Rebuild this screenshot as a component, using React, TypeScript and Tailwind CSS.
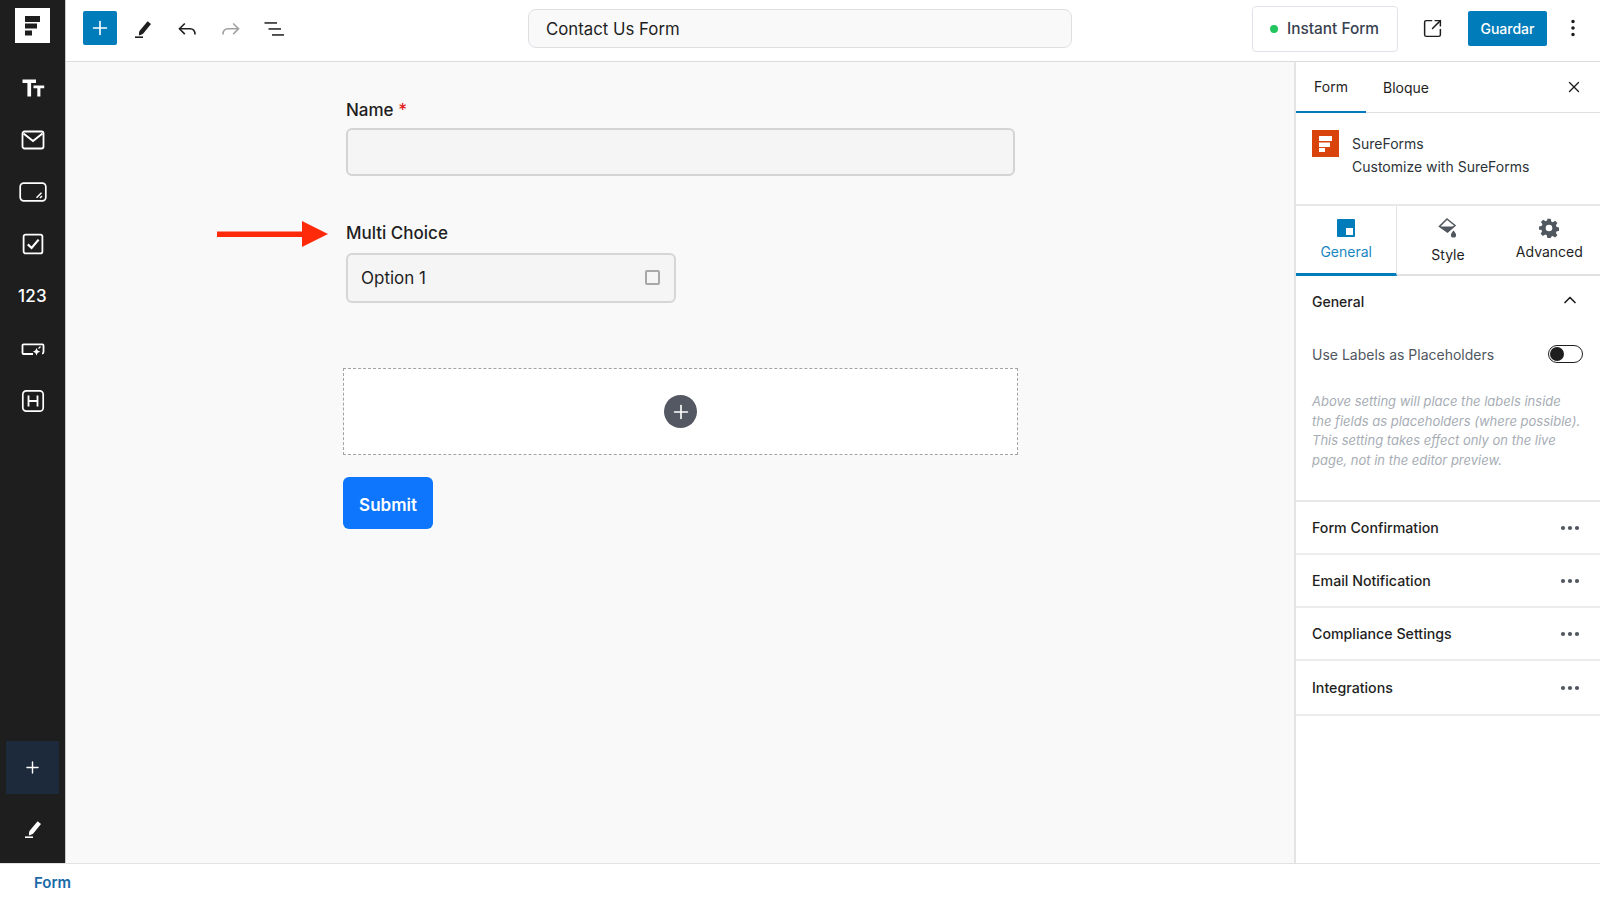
import React from "react";
import { Plus, X, ChevronUp, MoreHorizontal, MoreVertical, SquareArrowOutUpRight } from "lucide-react";

const Pencil = ({ color = "#1e1e1e" }: { color?: string }) => (
  <svg width="24" height="24" viewBox="0 0 24 24" fill="none">
    <path d="M16.6 4.2 20 6.9 12.3 16.4c-.6.7-2.6 1.5-4.3 2-.2-1.7.1-3.8.7-4.6L16.6 4.2Z" fill={color} />
    <rect x="4" y="19.4" width="8" height="1.6" fill={color} />
  </svg>
);

const UndoIcon = ({ color, flip }: { color: string; flip?: boolean }) => (
  <svg width="24" height="24" viewBox="0 0 24 24" fill="none" stroke={color} strokeWidth="1.6" className={flip ? "-scale-x-100" : ""}>
    <path d="M9.800 6.500 4.500 11.800l5.300 5.300" />
    <path d="M4.500 11.800H15c3 0 5 2 5 5.700" />
  </svg>
);

const ListIcon = () => (
  <svg width="24" height="24" viewBox="0 0 24 24" fill="#1e1e1e">
    <rect x="2.5" y="5.2" width="12.5" height="1.5" />
    <rect x="6.5" y="11.2" width="12.5" height="1.5" />
    <rect x="10" y="17.2" width="12" height="1.5" />
  </svg>
);

const SideIcon = ({ children }: { children: React.ReactNode }) => (
  <div className="h-[52.2px] flex items-center justify-center text-white">{children}</div>
);

const TextIcon = () => (
  <svg width="24" height="24" viewBox="0 0 24 24" fill="#fff">
    <path d="M1.5 3.5h13.5v3.4h-4.9v13.6H6.4V6.9H1.500Z" />
    <path d="M12.500 9.400h10.700v2.800h-3.800v8.300h-3.100v-8.300h-3.800Z" />
  </svg>
);
const MailIcon = () => (
  <svg width="24" height="24" viewBox="0 0 24 24" fill="none" stroke="#fff" strokeWidth="1.8">
    <rect x="1.500" y="3.500" width="21" height="17" rx="2" />
    <path d="m2.500 5.500 9.500 7.500 9.500-7.500" strokeWidth="2" />
  </svg>
);
const TextareaIcon = () => (
  <svg width="28" height="24" viewBox="0 0 28 24" fill="none" stroke="#fff" strokeWidth="1.700">
    <rect x="1.200" y="3.200" width="25.600" height="17.600" rx="3.500" />
    <path d="m17.500 17.800 5-5M21 18l2-2" strokeWidth="1.500" />
  </svg>
);
const CheckIcon = () => (
  <svg width="24" height="24" viewBox="0 0 24 24" fill="none" stroke="#fff">
    <rect x="2.600" y="2.600" width="18.800" height="18.800" rx="2" strokeWidth="1.800" />
    <path d="m6.800 12.400 3.800 3.600 7-8.400" strokeWidth="2.200" />
  </svg>
);
const ButtonIcon = () => (
  <svg width="24" height="24" viewBox="0 0 24 24" fill="none">
    <path d="M12 17H2.500a1 1 0 0 1-1-1V8.400a1 1 0 0 1 1-1h19a1 1 0 0 1 1 1V15a1.500 1.500 0 0 1-1.500 1.500" stroke="#fff" strokeWidth="1.800" />
    <path d="m15.500 11 1.200 2.600 2.600 1.100-2.600 1.100-1.200 2.600-1.200-2.600-2.400-1.100 2.400-1.100Z" fill="#fff" />
    <path d="m19.500 9.500-2 2.200" stroke="#fff" strokeWidth="1.200" />
  </svg>
);
const HeadingIcon = () => (
  <svg width="24" height="24" viewBox="0 0 24 24" fill="none" stroke="#fff">
    <rect x="1.800" y="1.800" width="20.400" height="20.400" rx="3.500" strokeWidth="1.700" />
    <path d="M7.500 6.500v11M16.500 6.500v11M7.500 12h9" strokeWidth="1.800" />
  </svg>
);

const Sidebar = () => (
  <aside className="w-[66px] shrink-0 h-full bg-[#1e1e1e] border-r border-[#c9c9c9] flex flex-col items-stretch">
    <div className="pt-2 pl-[15px]">
      <div className="w-[35px] h-[35px] bg-white flex items-center justify-center">
        <svg width="35" height="35" viewBox="0 0 35 35" fill="#1e1e1e">
          <rect x="10" y="8" width="15" height="6" />
          <rect x="10" y="15.500" width="12" height="5" />
          <rect x="10" y="22.500" width="7" height="5" />
        </svg>
      </div>
    </div>
    <div className="mt-[18.5px] flex flex-col">
      <SideIcon><TextIcon /></SideIcon>
      <SideIcon><MailIcon /></SideIcon>
      <SideIcon><TextareaIcon /></SideIcon>
      <SideIcon><CheckIcon /></SideIcon>
      <SideIcon><span className="text-[17px] font-medium tracking-[0.2px]">123</span></SideIcon>
      <SideIcon><ButtonIcon /></SideIcon>
      <SideIcon><HeadingIcon /></SideIcon>
    </div>
    <div className="mt-auto pl-[6px] pr-[6px]">
      <div className="h-[53px] w-[53px] bg-[#1c2a3b] flex items-center justify-center text-white">
        <Plus size={19} strokeWidth={1.8} />
      </div>
    </div>
    <div className="h-[69px] flex items-center justify-center"><Pencil color="#ffffff" /></div>
  </aside>
);

const TopBar = () => (
  <header className="h-[62px] shrink-0 bg-white border-b border-[#dcdcde] flex items-center">
    <div className="ml-[17px] w-[34px] h-[34px] mb-[5px] rounded-[2px] bg-[#007cba] flex items-center justify-center text-white">
      <Plus size={22} strokeWidth={1.8} />
    </div>
    <div className="ml-[14px] w-[24px] mb-[3px]"><Pencil /></div>
    <div className="ml-[20px] w-[24px] mb-[3px]"><UndoIcon color="#1e1e1e" /></div>
    <div className="ml-[20px] w-[24px] mb-[3px]"><UndoIcon color="#a0a0a0" flip /></div>
    <div className="ml-[19px] w-[24px] mb-[3px]"><ListIcon /></div>
    <div className="ml-[242px] w-[544px] h-[39px] mb-[4px] rounded-lg border border-[#dddfe3] bg-[#f9f9f9] flex items-center pl-[17px] pt-[2px] text-[16.8px] text-[#1e1e1e]">
      Contact Us Form
    </div>
    <div className="ml-[180px] w-[146px] h-[46px] mb-[4px] rounded-[4px] border border-[#dfe3e9] bg-white flex items-center pl-[17px] gap-[9px]">
      <span className="w-[8px] h-[8px] rounded-full bg-[#22c55e]" />
      <span className="text-[15.4px] font-medium text-[#374151]">Instant Form</span>
    </div>
    <div className="ml-[24px] w-[24px] mb-[5px] text-[#1e1e1e]"><SquareArrowOutUpRight size={21} strokeWidth={1.7} /></div>
    <div className="ml-[22px] w-[79px] h-[35px] mb-[5px] rounded-[2px] bg-[#007cba] text-white text-[14px] font-medium flex items-center justify-center">
      Guardar
    </div>
    <div className="ml-[15px] mb-[5px] text-[#1e1e1e]"><MoreVertical size={22} strokeWidth={1.9} /></div>
  </header>
);

const Canvas = () => (
  <main className="flex-1 bg-[#f9f9f9] flex flex-col items-center pt-[36px]">
    <div className="w-[675px] ml-[1px] relative">
      <div className="px-[3px]">
        <div className="text-[17px] font-medium text-[#1e1e1e] leading-[24px]">
          Name <span className="text-[#e11d1d]">*</span>
        </div>
        <div className="mt-[6px] h-[48px] rounded-md border-2 border-[#d4d4d4] bg-[#f5f5f5]" />
        <div className="mt-[45px] text-[17px] font-medium text-[#1e1e1e] leading-[24px]">Multi Choice</div>
        <div className="mt-[8px] w-[330px] h-[50px] rounded-md border-2 border-[#d6d6d6] bg-[#f5f5f5] flex items-center justify-between pl-[13px] pr-[14px]">
          <span className="text-[17px] text-[#1e1e1e] mt-[1px]">Option 1</span>
          <span className="w-[15px] h-[15px] mb-[2px] rounded-[2px] border-2 border-[#a8a8a8]" />
        </div>
      </div>
      <div className="mt-[65px] h-[87px] border border-dashed border-[#a3a3a3] bg-white flex items-center justify-center">
        <div className="w-[33px] h-[33px] rounded-full bg-[#535862] flex items-center justify-center text-white">
          <Plus size={22} strokeWidth={1.8} />
        </div>
      </div>
      <div className="mt-[22px] w-[90px] h-[52px] pt-[5px] rounded-md bg-[#0e76fd] text-white text-[17px] font-semibold flex items-center justify-center">
        Submit
      </div>
      <svg className="absolute left-[-126px] top-[123px]" width="111" height="26" viewBox="0 0 111 26" fill="#ff2a0a">
        <rect x="0" y="10.500" width="86" height="5.500" />
        <path d="M85 0 111 13 85 26Z" />
      </svg>
    </div>
  </main>
);

const Accordion = ({ title, h }: { title: string; h: string }) => (
  <div className={`${h} border-b-2 border-[#ececec] flex items-center justify-between pl-[16px] pr-[18px] text-[14.2px] font-medium text-[#1e1e1e]`}>
    <span>{title}</span>
    <MoreHorizontal size={24} strokeWidth={2.2} className="text-[#50575e]" />
  </div>
);

const Panel = () => (
  <aside className="w-[306px] shrink-0 bg-white border-l-2 border-[#e4e4e4] flex flex-col">
    <div className="h-[51px] border-b border-[#e0e0e0] flex items-stretch text-[14px] text-[#1e1e1e]">
      <div className="w-[70px] flex items-center justify-center border-b-2 border-[#007cba] h-[51px]">Form</div>
      <div className="ml-[17px] flex items-center">Bloque</div>
      <div className="ml-auto mr-[17px] flex items-center"><X size={18} strokeWidth={1.8} /></div>
    </div>
    <div className="h-[93px] pl-[16px] pt-[17px] flex items-start border-b-2 border-[#e8e8e8]">
      <svg width="27" height="27" viewBox="0 0 27 27" className="shrink-0">
        <rect width="27" height="27" fill="#d8440b" />
        <path d="M7 6h13v5H7ZM7 12.500h11V17H7ZM7 18h6v4H7Z" fill="#fff" />
      </svg>
      <div className="ml-[13px] text-[14px] leading-[23px] text-[#2c3338]">
        <div className="mt-[2px]">SureForms</div>
        <div>Customize with SureForms</div>
      </div>
    </div>
    <div className="h-[70px] border-b-2 border-[#e0e0e0] grid grid-cols-3 text-[14px]">
      <div className="border-r border-[#e4e4e4] border-b-[3px] border-b-[#007cba] h-[70px] flex flex-col items-center pt-[13px] text-[#1a87c2]">
        <svg width="18" height="18" viewBox="0 0 18 18"><path d="M0 1a1 1 0 0 1 1-1h16a1 1 0 0 1 1 1v16a1 1 0 0 1-1 1H1a1 1 0 0 1-1-1Z" fill="#007cba" /><rect x="9" y="9" width="7" height="7" fill="#fff" /></svg>
        <span className="mt-[4px]">General</span>
      </div>
      <div className="flex flex-col items-center pt-[11px] text-[#1e1e1e]">
        <svg width="20" height="22" viewBox="0 0 20 22">
          <path d="M9 2 17 8.500 9.500 15 1.500 9.500Z" fill="none" stroke="#50575e" strokeWidth="1.500" />
          <path d="M1.500 9.500h15L9.500 15Z" fill="#50575e" />
          <path d="M15.500 13.500c1.500 2 2.600 3.200 2.600 4.500a2.600 2.600 0 0 1-5.200 0c0-1.300 1.100-2.500 2.600-4.500Z" fill="#50575e" />
        </svg>
        <span className="mt-[5px]">Style</span>
      </div>
      <div className="flex flex-col items-center pt-[12px] text-[#1e1e1e]">
        <svg width="20" height="20" viewBox="0 0 24 24">
          <path fillRule="evenodd" fill="#50575e" d="M10 1h4l.6 3.200 2 .9 2.700-1.800 2.800 2.800-1.800 2.700.9 2 3.200.6v4l-3.200.6-.9 2 1.800 2.700-2.800 2.800-2.700-1.800-2 .9L14 24h-4l-.6-3.200-2-.9-2.700 1.800-2.800-2.800 1.800-2.700-.9-2L0 14.200v-4l3.200-.6.9-2L2.300 4.900l2.800-2.800 2.700 1.800 2-.9ZM12 8a4 4 0 1 0 0 8 4 4 0 0 0 0-8Z" />
        </svg>
        <span className="mt-[3px]">Advanced</span>
      </div>
    </div>
    <div className="h-[226px] border-b-2 border-[#e8e8e8] pl-[16px] pr-[17px] text-[14px]">
      <div className="h-[50px] flex items-center justify-between font-medium text-[#1e1e1e]">
        <span>General</span>
        <ChevronUp size={20} strokeWidth={2} className="mb-[2px] mr-[3px]" />
      </div>
      <div className="mt-[2px] h-[52px] flex items-center justify-between text-[#50575e]">
        <span>Use Labels as Placeholders</span>
        <div className="w-[35px] h-[18px] rounded-full border border-[#1e1e1e] bg-white flex items-center pl-[1px]">
          <span className="w-[14px] h-[14px] rounded-full bg-[#1e1e1e]" />
        </div>
      </div>
      <p className="mt-[12px] text-[13px] italic leading-[19.5px] text-[#a7adb5] whitespace-nowrap">
        Above setting will place the labels inside<br />
        the fields as placeholders (where possible).<br />
        This setting takes effect only on the live<br />
        page, not in the editor preview.
      </p>
    </div>
    <Accordion title="Form Confirmation" h="h-[53px]" />
    <Accordion title="Email Notification" h="h-[53px]" />
    <Accordion title="Compliance Settings" h="h-[53px]" />
    <Accordion title="Integrations" h="h-[55px]" />
  </aside>
);

export default function App() {
  return (
    <div className="w-[1600px] h-[900px] overflow-hidden flex flex-col bg-white font-['Inter',sans-serif]">
      <div className="h-[863px] flex shrink-0">
        <Sidebar />
        <div className="flex-1 flex flex-col min-w-0">
          <TopBar />
          <div className="flex-1 flex min-h-0">
            <Canvas />
            <Panel />
          </div>
        </div>
      </div>
      <div className="h-[37px] border-t border-[#e2e2e2] flex items-center pl-[34px] pt-[2px] text-[15px] font-semibold text-[#1a6aa8]">
        Form
      </div>
    </div>
  );
}
